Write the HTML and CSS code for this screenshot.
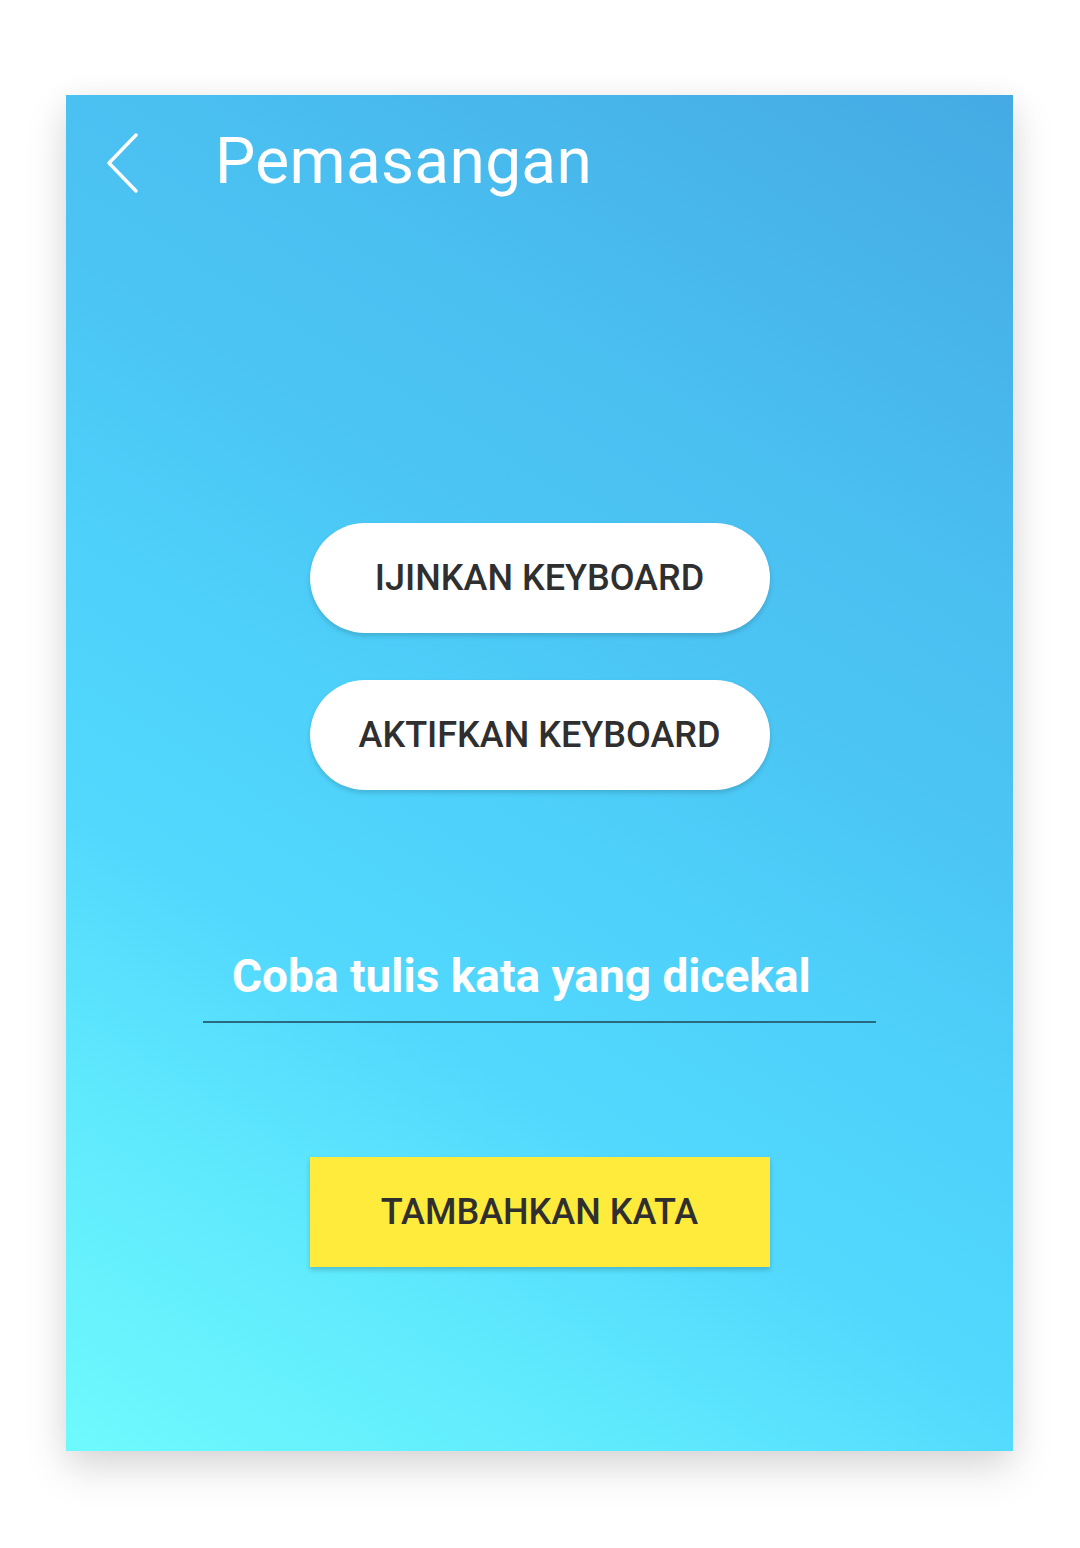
FILE: index.html
```html
<!DOCTYPE html>
<html lang="id">
<head>
<meta charset="utf-8">
<title>Pemasangan</title>
<link rel="stylesheet" href="styles.css">
</head>
<body>
<div class="stage">
  <div class="card">
    <header class="header">
      <svg class="back" width="40" height="64" viewBox="0 0 40 64">
        <polyline points="32,4 5,32 32,60" fill="none" stroke="#fff" stroke-width="3.5" stroke-linecap="round" stroke-linejoin="round"/>
      </svg>
      <h1 class="title">Pemasangan</h1>
    </header>
    <main class="content">
      <button class="pill">IJINKAN KEYBOARD</button>
      <button class="pill second">AKTIFKAN KEYBOARD</button>
      <div class="field">
        <span class="field-text">Coba tulis kata yang dicekal</span>
      </div>
      <button class="add">TAMBAHKAN KATA</button>
    </main>
  </div>
</div>
</body>
</html>
```
FILE: styles.css
```css
html, body {
  margin: 0;
  padding: 0;
  background: #ffffff;
}
body {
  width: 1080px;
  height: 1548px;
  overflow: hidden;
  font-family: Roboto, "Liberation Sans", sans-serif;
}
.stage {
  padding: 95px 0 0 66px;
}
.card {
  width: 947px;
  height: 1356px;
  background: linear-gradient(32deg, #6efafd 0%, #5fe9fd 19%, #52d8fd 33%, #4dd0fa 48%, #4bc4f3 62%, #4ac0f1 72%, #45aae3 100%);
  box-shadow: 0 18px 40px rgba(0, 0, 0, 0.13), 0 4px 30px rgba(0, 0, 0, 0.06);
  display: flex;
  flex-direction: column;
}
.header {
  height: 134px;
  display: flex;
  align-items: center;
}
.back {
  display: block;
  margin-left: 38px;
  margin-top: 2px;
}
.title {
  margin: 0 0 0 71px;
  font-size: 64px;
  font-weight: 400;
  color: #ffffff;
  letter-spacing: 0.3px;
  line-height: 1;
}
.content {
  display: flex;
  flex-direction: column;
  align-items: center;
  padding-top: 294px;
}
.pill {
  width: 460px;
  height: 110px;
  border: none;
  border-radius: 55px;
  background: #ffffff;
  color: #2f2f2f;
  font-family: Roboto, "Liberation Sans", sans-serif;
  font-weight: 500;
  font-size: 36px;
  box-shadow: 0 3px 5px rgba(0, 0, 0, 0.15);
  padding: 0;
}
.second {
  margin-top: 47px;
}
.field {
  width: 673px;
  margin-top: 156px;
  padding: 0 0 15px 0;
  border-bottom: 2px solid #2a6a80;
  box-sizing: content-box;
}
.field-text {
  display: block;
  padding-left: 29px;
  font-size: 46px;
  font-weight: 700;
  line-height: 60px;
  color: #ffffff;
}
.add {
  margin-top: 134px;
  width: 460px;
  height: 110px;
  border: none;
  border-radius: 0;
  background: #ffeb3b;
  color: #2f2f2f;
  font-family: Roboto, "Liberation Sans", sans-serif;
  font-weight: 500;
  font-size: 36px;
  box-shadow: 0 3px 5px rgba(0, 0, 0, 0.18);
  padding: 0;
}
```
